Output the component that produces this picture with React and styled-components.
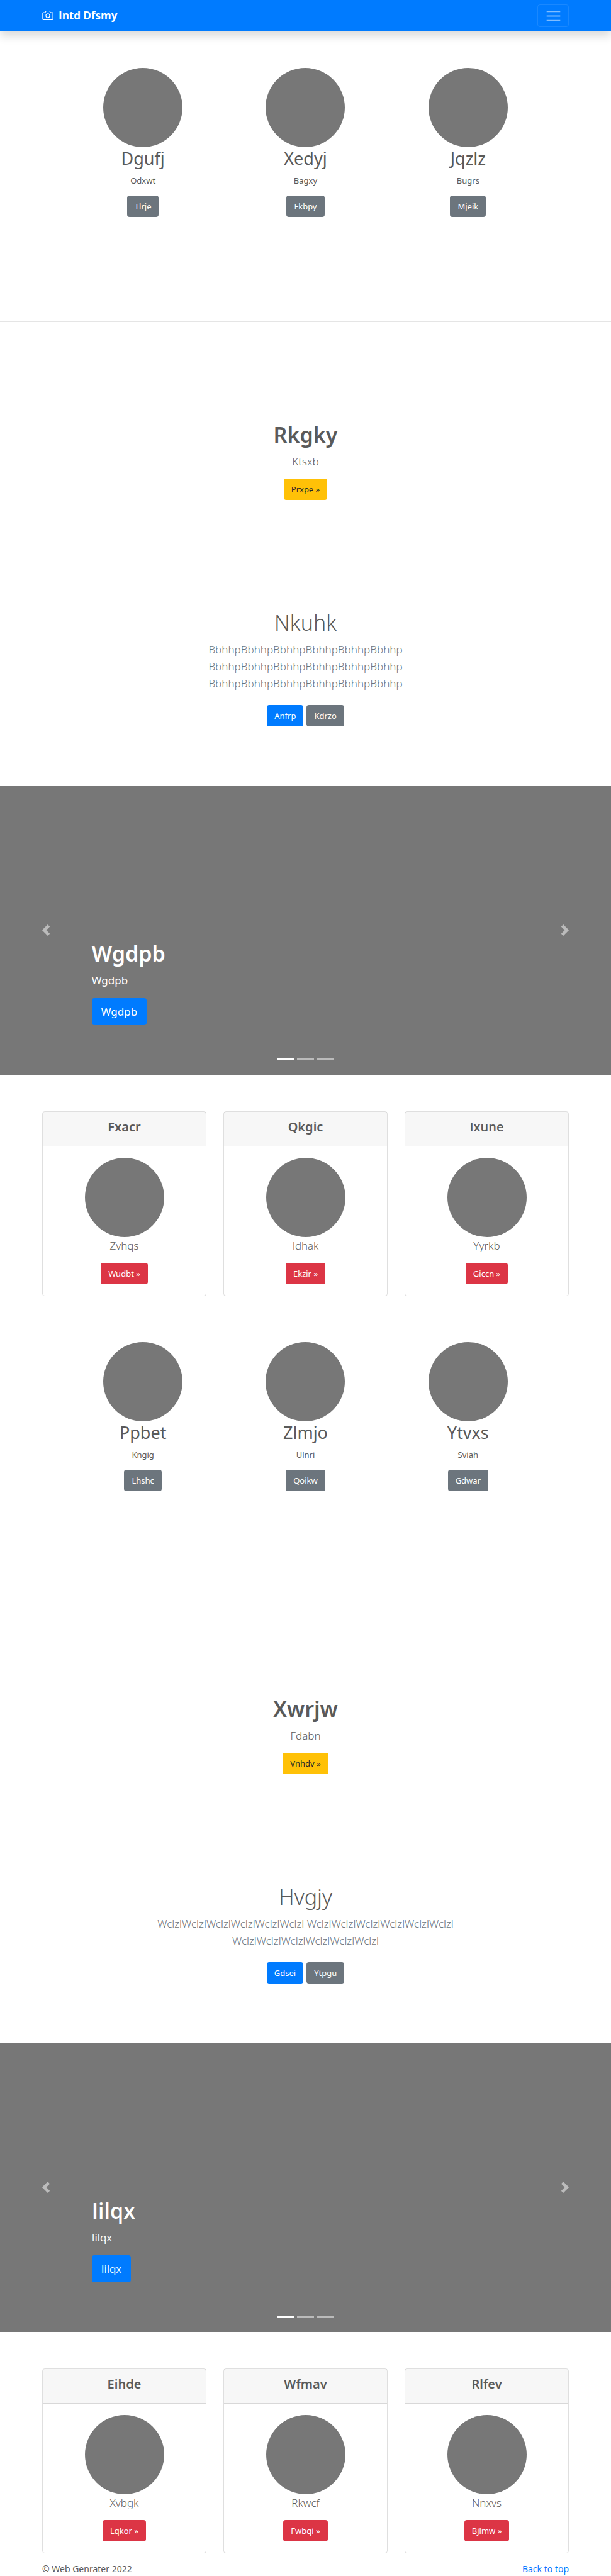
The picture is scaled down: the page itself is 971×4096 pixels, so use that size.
import React from "react";
import styled, { createGlobalStyle, css } from "styled-components";

const GlobalStyle = createGlobalStyle`
  *, *::before, *::after { box-sizing: border-box; }
  body {
    margin: 0;
    background: #fff;
    color: #5a5a5a;
    font-family: "Noto Sans", "Open Sans", sans-serif;
    font-size: 13px;
    line-height: 22px;
  }
  h1, h2, h3, h4, p { margin: 0; }
`;

const colors = {
  primary: "#007bff",
  secondary: "#6c757d",
  warning: "#ffc107",
  danger: "#dc3545",
};

const face = css`
  font-family: ${(p) =>
    /I/.test(String(p.children))
      ? '"Open Sans", "Noto Sans", sans-serif'
      : '"Noto Sans", "Open Sans", sans-serif'};
`;

const Container = styled.div`
  width: 100%;
  max-width: 863px;
  margin: 0 auto;
  padding: 0 13px;
`;

const Navbar = styled.header`
  background: ${colors.primary};
  box-shadow: 0 7px 14px rgba(0, 0, 0, 0.15);
`;

const NavInner = styled(Container)`
  display: flex;
  align-items: center;
  justify-content: space-between;
  height: 50px;
`;

const Brand = styled.a`
  display: flex;
  align-items: center;
  gap: 8px;
  color: #fff;
  font-size: 17px;
  font-weight: 700;
  text-decoration: none;
`;

const BrandName = styled.span`
  ${face}
`;

const Toggler = styled.button`
  display: flex;
  align-items: center;
  justify-content: center;
  width: 50px;
  height: 36px;
  padding: 0;
  border: 1px solid rgba(255, 255, 255, 0.1);
  border-radius: 4px;
  background: transparent;
`;

const Button = styled.a`
  ${face}
  display: inline-block;
  padding: 6px 12px;
  border-radius: 4px;
  background: ${(p) => colors[p.$tone]};
  color: ${(p) => (p.$tone === "warning" ? "#212529" : "#fff")};
  text-decoration: none;
  ${(p) =>
    p.$large &&
    css`
      padding: 8px 15px;
      font-size: 17px;
      line-height: 27px;
    `}
`;

const Circle = styled.div`
  width: 126px;
  height: 126px;
  border-radius: 50%;
  background: #777;
`;

const Features = styled.section`
  display: grid;
  grid-template-columns: repeat(3, 1fr);
  max-width: 775px;
  margin: 0 auto;
  padding: 58px 0 166px;
`;

const Feature = styled.div`
  display: flex;
  flex-direction: column;
  align-items: center;
`;

const FeatureTitle = styled.h2`
  ${face}
  margin-bottom: 7px;
  font-size: 27px;
  font-weight: 400;
  line-height: 35px;
`;

const FeatureText = styled.p`
  margin-bottom: 13px;
`;

const Divider = styled.hr`
  margin: 0;
  border: 0;
  border-top: 1px solid rgba(0, 0, 0, 0.1);
`;

const Hero = styled.section`
  display: flex;
  flex-direction: column;
  align-items: center;
  max-width: 540px;
  margin: 0 auto;
  padding: ${(p) => (p.$light ? "174px 0 94px" : "158px 0 0")};
  text-align: center;
`;

const HeroTitle = styled.h1`
  ${face}
  margin-bottom: 7px;
  font-size: 34px;
  font-weight: ${(p) => (p.$light ? 300 : 600)};
  line-height: 43px;
`;

const Lead = styled.p`
  ${face}
  margin-bottom: 14px;
  font-size: 17px;
  font-weight: 300;
  line-height: 27px;
  color: ${(p) => (p.$muted ? "#6c757d" : "inherit")};
`;

const Actions = styled.div`
  display: flex;
  gap: 5px;
  padding-top: 7px;
`;

const CarouselFrame = styled.section`
  position: relative;
  display: flex;
  height: 460px;
  background: #777;
  color: #fff;
`;

const Control = styled.button`
  flex: 0 0 15%;
  display: flex;
  align-items: center;
  justify-content: center;
  padding: 0;
  border: 0;
  background: transparent;
  opacity: 0.5;
`;

const Caption = styled.div`
  flex: 1;
  display: flex;
  flex-direction: column;
  align-items: flex-start;
  justify-content: flex-end;
  padding-bottom: 79px;
`;

const CaptionText = styled.p`
  ${face}
  margin-bottom: 15px;
  font-size: 17px;
  line-height: 27px;
`;

const Indicators = styled.div`
  position: absolute;
  right: 0;
  bottom: 23px;
  left: 0;
  display: flex;
  justify-content: center;
  gap: 5px;
`;

const Indicator = styled.button`
  width: 27px;
  height: 3px;
  padding: 0;
  border: 0;
  background: #fff;
  opacity: ${(p) => (p.$active ? 1 : 0.5)};
`;

const CardDeck = styled(Container)`
  display: grid;
  grid-template-columns: repeat(3, 1fr);
  gap: 27px;
  padding-top: 58px;
`;

const Card = styled.article`
  border: 1px solid rgba(0, 0, 0, 0.125);
  border-radius: 4px;
`;

const CardHeader = styled.div`
  padding: 11px 18px 17px;
  border-bottom: 1px solid rgba(0, 0, 0, 0.125);
  background: rgba(0, 0, 0, 0.03);
  text-align: center;
`;

const CardTitle = styled.h4`
  ${face}
  font-size: 20px;
  font-weight: 600;
  line-height: 26px;
`;

const CardBody = styled(Feature)`
  padding: 18px;
`;

const Footer = styled(Container)`
  display: flex;
  justify-content: space-between;
  padding-top: 14px;
  font-size: 14px;
`;

const TopLink = styled.a`
  color: ${colors.primary};
  text-decoration: none;
`;

const Spacer = styled.div`
  height: 15px;
`;

function CameraIcon() {
  return (
    <svg width="18" height="18" viewBox="0 0 20 20" fill="none" stroke="#fff" strokeWidth="1.3" aria-hidden="true">
      <path d="M2 4.5h3.2L7 1.7h6l1.8 2.8H18a1 1 0 0 1 1 1V16a1 1 0 0 1-1 1H2a1 1 0 0 1-1-1V5.5a1 1 0 0 1 1-1z" />
      <circle cx="10" cy="10" r="3.4" />
    </svg>
  );
}

function MenuIcon() {
  return (
    <svg width="27" height="27" viewBox="0 0 30 30" stroke="rgba(255,255,255,0.5)" strokeWidth="2" aria-hidden="true">
      <path d="M3 7h24M3 15h24M3 23h24" />
    </svg>
  );
}

function Arrow({ next }) {
  return (
    <svg width="18" height="18" viewBox="0 0 8 8" fill="#fff" aria-hidden="true">
      <path
        d={
          next
            ? "M2.75 0l-1.5 1.5L3.75 4l-2.5 2.5L2.75 8l4-4-4-4z"
            : "M5.25 0l-4 4 4 4 1.5-1.5L4.25 4l2.5-2.5L5.25 0z"
        }
      />
    </svg>
  );
}

function FeatureRow({ items }) {
  return (
    <Features>
      {items.map(([title, text, action]) => (
        <Feature key={title}>
          <Circle />
          <FeatureTitle>{title}</FeatureTitle>
          <FeatureText>{text}</FeatureText>
          <Button href="#" $tone="secondary">{action}</Button>
        </Feature>
      ))}
    </Features>
  );
}

function Carousel({ label }) {
  return (
    <CarouselFrame>
      <Control type="button" aria-label="Previous"><Arrow /></Control>
      <Caption>
        <HeroTitle>{label}</HeroTitle>
        <CaptionText>{label}</CaptionText>
        <Button href="#" $tone="primary" $large>{label}</Button>
      </Caption>
      <Control type="button" aria-label="Next"><Arrow next /></Control>
      <Indicators>
        {[0, 1, 2].map((i) => (
          <Indicator key={i} type="button" aria-label={`Slide ${i + 1}`} $active={i === 0} />
        ))}
      </Indicators>
    </CarouselFrame>
  );
}

function Cards({ items }) {
  return (
    <CardDeck>
      {items.map(([title, text, action]) => (
        <Card key={title}>
          <CardHeader><CardTitle>{title}</CardTitle></CardHeader>
          <CardBody>
            <Circle />
            <Lead>{text}</Lead>
            <Button href="#" $tone="danger">{action} »</Button>
          </CardBody>
        </Card>
      ))}
    </CardDeck>
  );
}

function Block({ features, intro, pitch, slide, cards }) {
  return (
    <>
      <FeatureRow items={features} />
      <Divider />
      <Hero>
        <HeroTitle>{intro.title}</HeroTitle>
        <Lead>{intro.text}</Lead>
        <Button href="#" $tone="warning">{intro.action} »</Button>
      </Hero>
      <Hero $light>
        <HeroTitle $light>{pitch.title}</HeroTitle>
        <Lead $muted>{pitch.text}</Lead>
        <Actions>
          <Button href="#" $tone="primary">{pitch.actions[0]}</Button>
          <Button href="#" $tone="secondary">{pitch.actions[1]}</Button>
        </Actions>
      </Hero>
      <Carousel label={slide} />
      <Cards items={cards} />
    </>
  );
}

const blocks = [
  {
    features: [["Dgufj", "Odxwt", "Tlrje"], ["Xedyj", "Bagxy", "Fkbpy"], ["Jqzlz", "Bugrs", "Mjeik"]],
    intro: { title: "Rkgky", text: "Ktsxb", action: "Prxpe" },
    pitch: {
      title: "Nkuhk",
      text: Array(3).fill("Bbhhp".repeat(6)).join(" "),
      actions: ["Anfrp", "Kdrzo"],
    },
    slide: "Wgdpb",
    cards: [["Fxacr", "Zvhqs", "Wudbt"], ["Qkgic", "Idhak", "Ekzir"], ["Ixune", "Yyrkb", "Giccn"]],
  },
  {
    features: [["Ppbet", "Kngig", "Lhshc"], ["Zlmjo", "Ulnri", "Qoikw"], ["Ytvxs", "Sviah", "Gdwar"]],
    intro: { title: "Xwrjw", text: "Fdabn", action: "Vnhdv" },
    pitch: {
      title: "Hvgjy",
      text: Array(3).fill("Wclzl".repeat(6)).join(" "),
      actions: ["Gdsei", "Ytpgu"],
    },
    slide: "Iilqx",
    cards: [["Eihde", "Xvbgk", "Lqkor"], ["Wfmav", "Rkwcf", "Fwbqi"], ["Rlfev", "Nnxvs", "Bjlmw"]],
  },
];

export default function App() {
  return (
    <>
      <GlobalStyle />
      <Navbar>
        <NavInner>
          <Brand href="#"><CameraIcon /><BrandName>Intd Dfsmy</BrandName></Brand>
          <Toggler type="button" aria-label="Toggle navigation"><MenuIcon /></Toggler>
        </NavInner>
      </Navbar>
      <main>
        <Block {...blocks[0]} />
        <Spacer />
        <Block {...blocks[1]} />
      </main>
      <Footer as="footer">
        <span>© Web Genrater 2022</span>
        <TopLink href="#">Back to top</TopLink>
      </Footer>
    </>
  );
}
